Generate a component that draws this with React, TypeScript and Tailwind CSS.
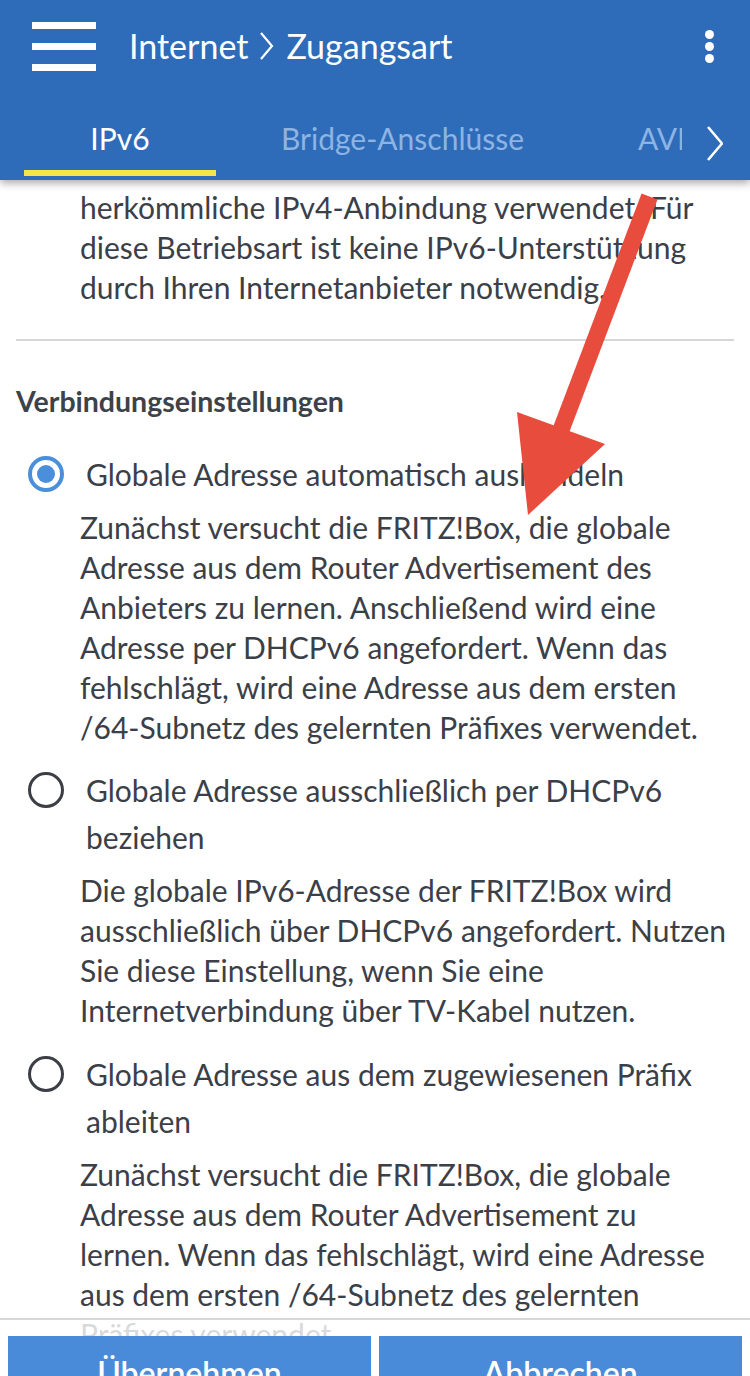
import React from "react";

const font = { fontFamily: "Lato, 'Noto Sans', sans-serif" };

function Radio({ checked }: { checked?: boolean }) {
  if (checked) {
    return (
      <div className="w-[36px] h-[36px] rounded-full border-[4px] border-[#4a8fdc] flex items-center justify-center shrink-0">
        <div className="w-[18px] h-[18px] rounded-full bg-[#4a8fdc]" />
      </div>
    );
  }
  return <div className="w-[36px] h-[36px] rounded-full border-[3.5px] border-[#3b3f45] shrink-0" />;
}

function Lines({ lines, className }: { lines: string[]; className?: string }) {
  return (
    <div className={className}>
      {lines.map((l, i) => (
        <div key={i} className="whitespace-nowrap">
          {l}
        </div>
      ))}
    </div>
  );
}

function Option({
  checked,
  label,
  desc,
  className,
}: {
  checked?: boolean;
  label: string[];
  desc: string[];
  className?: string;
}) {
  return (
    <div className={className}>
      <div className="flex pl-[28px]">
        <div className="pt-[5px]">
          <Radio checked={checked} />
        </div>
        <Lines lines={label} className="ml-[22px] leading-[47px] text-[30px]" />
      </div>
      <Lines lines={desc} className="pl-[80px] mt-[9px] leading-[40px] text-[30px]" />
    </div>
  );
}

export default function App() {
  return (
    <div className="relative w-[750px] h-[1376px] overflow-hidden bg-white text-[#3b4048]" style={font}>
      {/* Header */}
      <div className="relative z-10 bg-[#2e6cba] h-[180px] shadow-[0_3px_8px_rgba(0,0,0,0.35)] text-white">
        <div className="h-[92px] flex items-center pl-[32px] pr-[36px]">
          <div className="flex flex-col gap-[14px]">
            <div className="w-[64px] h-[7px] bg-white" />
            <div className="w-[64px] h-[7px] bg-white" />
            <div className="w-[64px] h-[7px] bg-white" />
          </div>
          <div className="ml-[33px] flex items-center text-[34px] leading-[40px]">
            <span>Internet</span>
            <svg width="16" height="30" viewBox="0 0 16 30" className="mx-[11px]">
              <polyline points="2,2 13,15 2,28" fill="none" stroke="white" strokeWidth="2.2" />
            </svg>
            <span>Zugangsart</span>
          </div>
          <div className="ml-auto flex flex-col gap-[3px]">
            <div className="w-[9px] h-[9px] rounded-full bg-white" />
            <div className="w-[9px] h-[9px] rounded-full bg-white" />
            <div className="w-[9px] h-[9px] rounded-full bg-white" />
          </div>
        </div>
        <div className="h-[88px] flex">
          <div className="ml-[24px] w-[658px] overflow-hidden flex text-[30px] leading-[40px]">
            <div className="w-[192px] shrink-0 flex flex-col">
              <div className="pt-[26px] text-center text-white">IPv6</div>
              <div className="mt-auto mb-[4px] h-[6px] bg-[#f2e64b]" />
            </div>
            <div className="pl-[65px] shrink-0 pt-[26px] text-[#8db4e2] whitespace-nowrap">Bridge-Anschlüsse</div>
            <div className="pl-[114px] shrink-0 pt-[26px] text-[#8db4e2] whitespace-nowrap">AVM-Dienste</div>
          </div>
          <div className="ml-[25px] pt-[34px]">
            <svg width="16" height="36" viewBox="0 0 16 36">
              <polyline points="1,1 15,17.5 1,34" fill="none" stroke="white" strokeWidth="2.6" />
            </svg>
          </div>
        </div>
      </div>

      {/* Content */}
      <div className="pt-[7px]">
        <Lines
          className="pl-[80px] leading-[40px] text-[30px]"
          lines={[
            "herkömmliche IPv4-Anbindung verwendet. Für",
            "diese Betriebsart ist keine IPv6-Unterstützung",
            "durch Ihren Internetanbieter notwendig.",
          ]}
        />
        <div className="mt-[32px] mx-[16px] h-[2px] bg-[#d6d6d6]" />
        <div className="mt-[40px] pl-[16px] text-[28.5px] leading-[40px] font-bold text-[#3d4249]">
          Verbindungseinstellungen
        </div>
        <Option
          className="mt-[30px]"
          checked
          label={["Globale Adresse automatisch aushandeln"]}
          desc={[
            "Zunächst versucht die FRITZ!Box, die globale",
            "Adresse aus dem Router Advertisement des",
            "Anbieters zu lernen. Anschließend wird eine",
            "Adresse per DHCPv6 angefordert. Wenn das",
            "fehlschlägt, wird eine Adresse aus dem ersten",
            "/64-Subnetz des gelernten Präfixes verwendet.",
          ]}
        />
        <Option
          className="mt-[20px]"
          label={["Globale Adresse ausschließlich per DHCPv6", "beziehen"]}
          desc={[
            "Die globale IPv6-Adresse der FRITZ!Box wird",
            "ausschließlich über DHCPv6 angefordert. Nutzen",
            "Sie diese Einstellung, wenn Sie eine",
            "Internetverbindung über TV-Kabel nutzen.",
          ]}
        />
        <Option
          className="mt-[21px]"
          label={["Globale Adresse aus dem zugewiesenen Präfix", "ableiten"]}
          desc={[
            "Zunächst versucht die FRITZ!Box, die globale",
            "Adresse aus dem Router Advertisement zu",
            "lernen. Wenn das fehlschlägt, wird eine Adresse",
            "aus dem ersten /64-Subnetz des gelernten",
            "Präfixes verwendet.",
          ]}
        />
      </div>

      {/* Bottom bar */}
      <div className="absolute left-0 right-0 bottom-0 h-[58px] border-t-2 border-[#d8d8d8] bg-white/80 z-10">
        <div className="mt-[16px] px-[8px] flex gap-[8px]">
          <div className="flex-1 h-[74px] bg-[#4a8bd9] text-white text-[32px] flex items-center justify-center font-semibold">
            Übernehmen
          </div>
          <div className="flex-1 h-[74px] bg-[#4a8bd9] text-white text-[32px] flex items-center justify-center font-semibold">
            Abbrechen
          </div>
        </div>
      </div>

      {/* Red arrow annotation */}
      <svg className="absolute inset-0 z-20 pointer-events-none" width="750" height="1376" viewBox="0 0 750 1376">
        <line x1="649.5" y1="196.5" x2="561" y2="430" stroke="#e84c3d" strokeWidth="17" />
        <polygon points="517,412 605,444 528,515" fill="#e84c3d" />
      </svg>
    </div>
  );
}
